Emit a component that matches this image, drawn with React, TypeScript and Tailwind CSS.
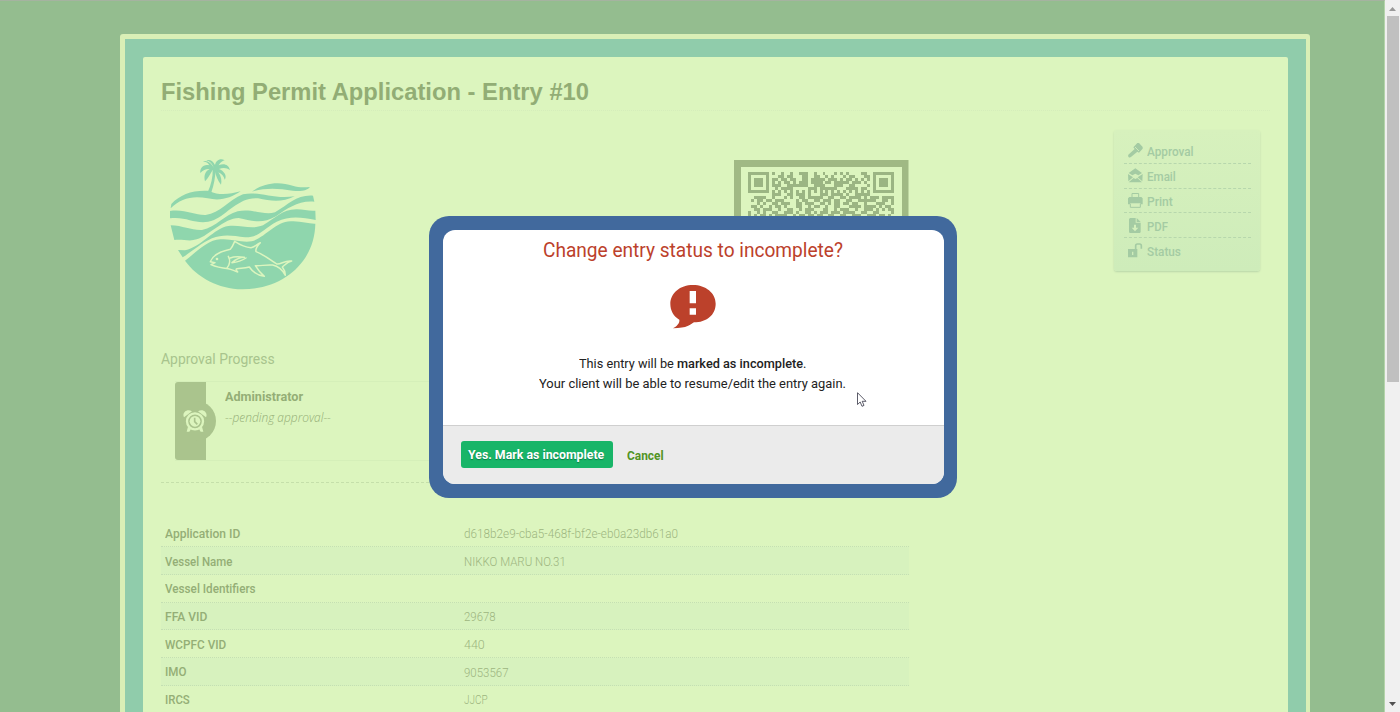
import { useLayoutEffect, useRef, type ReactNode } from 'react'

/* Single line of text condensed to a fixed width. */
function Fit({ width, className = '', children }: { width: number; className?: string; children: ReactNode }) {
  const ref = useRef<HTMLSpanElement>(null)
  useLayoutEffect(() => {
    const el = ref.current
    if (!el) return
    el.style.transform = `scaleX(${width / el.offsetWidth})`
  }, [width])
  return (
    <span className={`inline-block whitespace-nowrap ${className}`} style={{ width }}>
      <span ref={ref} className="inline-block origin-left">
        {children}
      </span>
    </span>
  )
}

const rows = [
  { label: 'Application ID', lw: 75, value: 'd618b2e9-cba5-468f-bf2e-eb0a23db61a0', vw: 214 },
  { label: 'Vessel Name', lw: 67, value: 'NIKKO MARU NO.31', vw: 102 },
  { label: 'Vessel Identifiers', lw: 91, value: '', vw: 0 },
  { label: 'FFA VID', lw: 42, value: '29678', vw: 32 },
  { label: 'WCPFC VID', lw: 61, value: '440', vw: 21 },
  { label: 'IMO', lw: 21.5, value: '9053567', vw: 45 },
  { label: 'IRCS', lw: 24.5, value: 'JJCP', vw: 24 },
]

const qr = [
  '1111111010010010011100100100010101000011001111111',
  '1000001000110110001100110010100010110001101000001',
  '1011101011011011001101111101110101101010101011101',
  '1011101010101101011101111011011111011101001011101',
  '1011101011100111111100111100011100110000101011101',
  '1000001001011110000011101111110001111011001000001',
  '1111111010101010101010101010101010101010101111111',
  '0000000011100110111010001110111101001111100000000',
  '0011110010001010011011111001100110111101011101111',
  '0101101101110000101100110111011001100111111001101',
  '0001010011011100110111001101011011011001000111001',
  '0110100101101000110010110010011000111101111010110',
  '0011011100100110010111000110010111001001110101011',
  '1001010011001110100110101110111011110011001100001',
  '1010110101111001011011011001100110011100111011010',
  '0110101100100110110101100110111001101011010110110',
]

function QrCode() {
  return (
    <svg className="h-[175px] w-[175px]" viewBox="0 0 175 175">
      <rect width="174.5" height="175" fill="#a0b984" />
      <rect x="7" y="7" width="161" height="161" fill="#dcf5be" />
      <g fill="#9bb583" shapeRendering="crispEdges">
        {qr.flatMap((line, y) =>
          line.split('').map((c, x) =>
            c === '1' ? <rect key={`${x}-${y}`} x={14 + x * 2.98} y={12 + y * 2.98} width="2.98" height="2.98" /> : null,
          ),
        )}
      </g>
    </svg>
  )
}

function Logo() {
  return (
    <svg className="h-[155px] w-[170px]" viewBox="0 0 510 465" fill="#8fd6ad">
      <path d="M143 142C153 120 159 97 158 73L167 70C166 98 162 120 154 142Z" />
      <path d="M162 70C155 53 137 42 128 51C137 49 145 55 148 61C130 56 119 70 121 84C129 75 139 71 149 72C135 79 131 92 135 109C144 101 150 88 158 75L164 77C168 91 172 105 183 119C186 108 184 94 175 82C187 87 192 96 194 104C203 93 191 77 177 72C190 67 201 69 210 75C206 59 192 53 176 61C182 51 188 47 194 46C181 37 167 47 165 60C160 47 148 42 139 46C151 49 157 57 162 70Z" />
      <path d="M32 190L34 177C62 148 98 135 148 138C181 154 211 146 242 139C213 159 181 169 143 160C99 151 62 159 32 190Z" />
      <path d="M276 140C312 112 359 109 398 122C418 129 434 127 450 126C443 135 425 141 398 137C353 129 313 128 276 140Z" />
      <path d="M30 198C76 192 103 211 137 210C181 204 204 167 249 148C296 137 338 164 404 154C368 172 335 169 294 160C238 155 203 207 162 225C111 245 83 212 30 220Z" />
      <path d="M32 241C69 242 97 257 126 255C169 246 193 210 233 199C277 189 311 213 345 202C387 178 409 149 459 152L463 170C415 166 383 190 348 214C307 238 276 228 236 219C192 219 149 271 110 283C88 291 65 281 43 285Z" />
      <path d="M54 315L75 316C127 304 161 250 205 243C244 239 273 255 309 241C346 220 367 192 411 193C431 193 448 199 466 197L467 225C425 217 389 212 350 230C309 252 296 278 255 277C219 272 190 266 156 280C121 296 95 321 68 337Z" />
      <path d="M75 347C109 321 145 284 181 283C216 280 242 294 275 289C319 276 344 231 392 229C422 227 446 237 466 236C464 351 370 433 247 433C174 431 112 398 75 347Z" />
      <g fill="none" stroke="#dcf5be" strokeWidth="4.5" strokeLinejoin="round" strokeLinecap="round">
        <path d="M151 350C159 328 183 319 211 313C217 307 221 296 224 289C241 300 258 307 273 308C287 306 292 296 301 293C291 303 286 311 288 320C312 329 332 345 350 357C363 359 374 345 395 348C382 350 374 361 367 366C374 375 376 382 376 391C367 374 353 363 338 360C316 358 302 364 286 362C295 377 304 386 313 394C290 391 276 378 268 366C253 371 242 369 231 371C225 373 231 378 233 381C221 377 215 373 205 371C183 369 166 365 153 359L165 353L151 350Z" />
        <path d="M205 334C211 345 210 358 201 369M211 339C225 333 238 335 253 337C237 337 224 346 216 353C229 352 243 349 258 339" />
      </g>
      <circle cx="171" cy="342" r="4" fill="#dcf5be" />
    </svg>
  )
}

function ActionIcon({ name }: { name: string }) {
  return (
    <svg className="h-[15px] w-[15px] shrink-0" viewBox="0 0 45 45" fill="#a4cba3">
      {name === 'Approval' && (
        <>
          <path d="M16 13L28 0H33L44 12V17L33 29L28 26L8 43C2 45-1 40 1 35L20 18Z" />
          <path d="M21 12L33 24" stroke="#d5f0bd" strokeWidth="2.5" />
        </>
      )}
      {name === 'Email' && (
        <>
          <path d="M22 1L42 15L31 22L22 17L13 22L2 15Z" />
          <path d="M0 18L15 28L1 40ZM44 18L29 28L43 40ZM2 43L17 30L22 33L28 30L42 43Z" />
        </>
      )}
      {name === 'Print' && (
        <>
          <path d="M12 12V1.5H32V12" fill="none" stroke="#a4cba3" strokeWidth="3" />
          <path d="M4 12H40L44 16V34H37V31H7V34H0V16Z" />
          <path d="M7 33V43H37V33" fill="#d4efbc" stroke="#a4cba3" strokeWidth="3" />
        </>
      )}
      {name === 'PDF' && (
        <>
          <path d="M6 0H23V14H38V42L36 45H5L3 42V3Z" />
          <path d="M26 0L38 12H26Z" />
          <path d="M18 20H24V29H31L21 40L11 29H18Z" fill="#d3efbc" />
        </>
      )}
      {name === 'Status' && (
        <>
          <path d="M0 18H28V43H0ZM12 26V36H16V26Z" fillRule="evenodd" />
          <path d="M23 18V8Q23 3 28 3H35Q40 3 40 8V17" fill="none" stroke="#a4cba3" strokeWidth="5" />
        </>
      )}
    </svg>
  )
}

const actions = [
  { name: 'Approval', w: 47 },
  { name: 'Email', w: 28.5 },
  { name: 'Print', w: 26 },
  { name: 'PDF', w: 21 },
  { name: 'Status', w: 33.5 },
]

function AlarmIcon() {
  return (
    <svg className="h-[22px] w-[24px]" viewBox="0 0 72 66" fill="#dcf5be">
      <path d="M3 22C-4 8 12-6 27 4ZM45 4C60-6 76 8 69 22Z" />
      <circle cx="36" cy="34" r="24" fill="none" stroke="#dcf5be" strokeWidth="7" />
      <circle cx="36" cy="34" r="16" />
      <path d="M35 23V35L43 43" fill="none" stroke="#aac48d" strokeWidth="5" />
      <path d="M15 50L11 65H19L24 57ZM57 50L61 65H53L48 57Z" />
    </svg>
  )
}

function Scrollbar() {
  return (
    <div className="flex h-full w-[15px] shrink-0 flex-col items-center justify-between bg-[#f0f0f0]">
      <div className="flex w-full flex-col items-center">
        <svg className="h-4 w-[15px]" viewBox="0 0 15 16">
          <path d="M4 11L7.5 7L11 11Z" fill="#999" />
        </svg>
        <div className="h-[366px] w-[12px] bg-[#c0c0c0]" />
      </div>
      <svg className="h-4 w-[15px]" viewBox="0 0 15 16">
        <path d="M4 6H11L7.5 10Z" fill="#505050" />
      </svg>
    </div>
  )
}

function Dialog() {
  return (
    <div className="absolute left-[429px] top-[216px] h-[282px] w-[528px] rounded-[20px] bg-[#41699d] p-[14px] pr-[13.5px]">
      <div className="flex h-full flex-col overflow-hidden rounded-[12px] bg-white">
        <div className="flex h-[195px] flex-col items-center text-[#222]">
          <h2 className="mt-[5px] h-[32px] text-[21px] leading-[30px] text-[#bc412b]">
            <Fit width={300}>Change entry status to incomplete?</Fit>
          </h2>
          <svg className="mt-[18px] h-[44px] w-[46px]" viewBox="0 0 138 132" fill="#bc412b">
            <path d="M69 0C107 0 137 24 137 56C137 90 109 112 72 112C62 118 52 130 9 130C20 124 30 114 28 104C10 94 1 76 1 57C1 24 30 0 69 0ZM59 18V55H78V18ZM59 70V89H78V70Z" fillRule="evenodd" />
          </svg>
          <p className="mr-px mt-[24px] flex flex-col items-center text-[13.5px] leading-5">
            <Fit width={227}>
              This entry will be <span className="font-medium">marked as incomplete</span>.
            </Fit>
            <Fit width={307}>Your client will be able to resume/edit the entry again.</Fit>
          </p>
        </div>
        <div className="flex grow gap-[14px] border-t border-[#cfcfcf] bg-[#ebebeb] pl-[18px] pt-[15px]">
          <button className="flex h-[27px] w-[152px] items-center rounded-[3px] bg-[#18b568] pl-[7px] text-[13.5px] font-bold text-white [text-shadow:0_1px_1px_#0b7d45]">
            <Fit width={136}>Yes. Mark as incomplete</Fit>
          </button>
          <a className="text-[13.5px] font-bold leading-[28px] text-[#529425]">
            <Fit width={37}>Cancel</Fit>
          </a>
        </div>
      </div>
    </div>
  )
}

export default function App() {
  return (
    <div className="relative flex h-[712px] w-[1400px] overflow-hidden bg-[#94bd8f] font-['Roboto','Open_Sans',sans-serif] text-[#94ae76]">
      <div className="h-full grow border-r border-t border-r-[#b4d4aa] border-t-[#a5b3a0] pl-[120px] pt-[33px]">
        <div className="h-[760px] w-[1190px] rounded-[3px] border-4 border-l-5 border-t-5 border-[#d9efb6] bg-[#90ccab] px-[18px] pt-[18px]">
          <div className="h-full rounded-[2px] bg-[#dcf5be] px-[18px]">
            <h1 className="h-[54px] border-b border-dotted border-[#d5edbb] pt-[17px] font-['Liberation_Sans',sans-serif] text-[24px] font-bold leading-9 text-[#92ad75]">
              <Fit width={428.5}>Fishing Permit Application - Entry #10</Fit>
            </h1>
            <div className="flex justify-between">
              <div className="w-[748px]">
                <div className="flex h-[236px] justify-between pt-[34px]">
                  <div className="-ml-px">
                    <Logo />
                  </div>
                  <div className="pt-[15px]">
                    <QrCode />
                  </div>
                </div>
                <h3 className="h-[34px] text-[15.5px] leading-[24px] text-[#a8c48d]">
                  <Fit width={114}>Approval Progress</Fit>
                </h3>
                <div className="ml-[14px] flex h-[80px] border border-l-0 border-[#d5efb9]">
                  <div className="relative h-[78px] w-[31px] rounded-l-[3px] bg-[#aac48d]">
                    <div className="absolute left-0 top-[19px] h-[40px] w-[41px] rounded-r-full bg-[#aac48d]" />
                    <div className="absolute left-[8px] top-[28px]">
                      <AlarmIcon />
                    </div>
                  </div>
                  <div className="pl-[19px] pt-[3px]">
                    <div className="text-[13.5px] font-bold leading-[22px]">
                      <Fit width={78.5}>Administrator</Fit>
                    </div>
                    <div className="pt-px font-['Open_Sans',sans-serif] text-[12.5px] font-light italic leading-[20px]">
                      <Fit width={106}>--pending approval--</Fit>
                    </div>
                  </div>
                </div>
                <div className="mt-[21px] border-b border-dashed border-[#c5dfaa]" />
                <div className="mt-[36.7px]">
                  {rows.map((r, i) => (
                    <div
                      key={r.label}
                      className={`flex h-[27.7px] items-center border-b border-dotted border-[#c4dfb3] text-[13.5px] ${i % 2 ? 'bg-[#d7f2be]' : ''}`}
                    >
                      <div className="w-[303px] pl-[4px] font-medium">
                        <Fit width={r.lw}>{r.label}</Fit>
                      </div>
                      {r.value && (
                        <Fit width={r.vw} className="pt-[3px] text-[12.5px] font-light text-[#9db580]">
                          {r.value}
                        </Fit>
                      )}
                    </div>
                  ))}
                </div>
              </div>
              <aside className="mr-[10px] mt-[19px] h-[141px] w-[146px] rounded-[3px] bg-linear-to-b from-[#d7f1bd] to-[#ceecba] pl-[10px] pr-[9px] pt-[9px] shadow-[0_1px_2px_#b9d6a9]">
                {actions.map((a, i) => (
                  <div
                    key={a.name}
                    className={`flex h-[24.75px] items-center gap-[4px] pl-[4px] text-[13px] font-medium text-[#a4cba3] ${i < 4 ? 'border-b border-dashed border-[#b7d7ad]' : ''}`}
                  >
                    <ActionIcon name={a.name} />
                    <Fit width={a.w} className="pt-[2.5px]">
                      {a.name}
                    </Fit>
                  </div>
                ))}
              </aside>
            </div>
          </div>
        </div>
      </div>
      <Scrollbar />
      <Dialog />
      <svg className="absolute left-[857px] top-[392px] h-[16px] w-[10px]" viewBox="0 0 10 16">
        <path d="M.5 .7V12.5L3.2 10L5 14.3L7 13.4L5.2 9.3H9Z" fill="white" stroke="#334" strokeWidth=".8" />
      </svg>
    </div>
  )
}
